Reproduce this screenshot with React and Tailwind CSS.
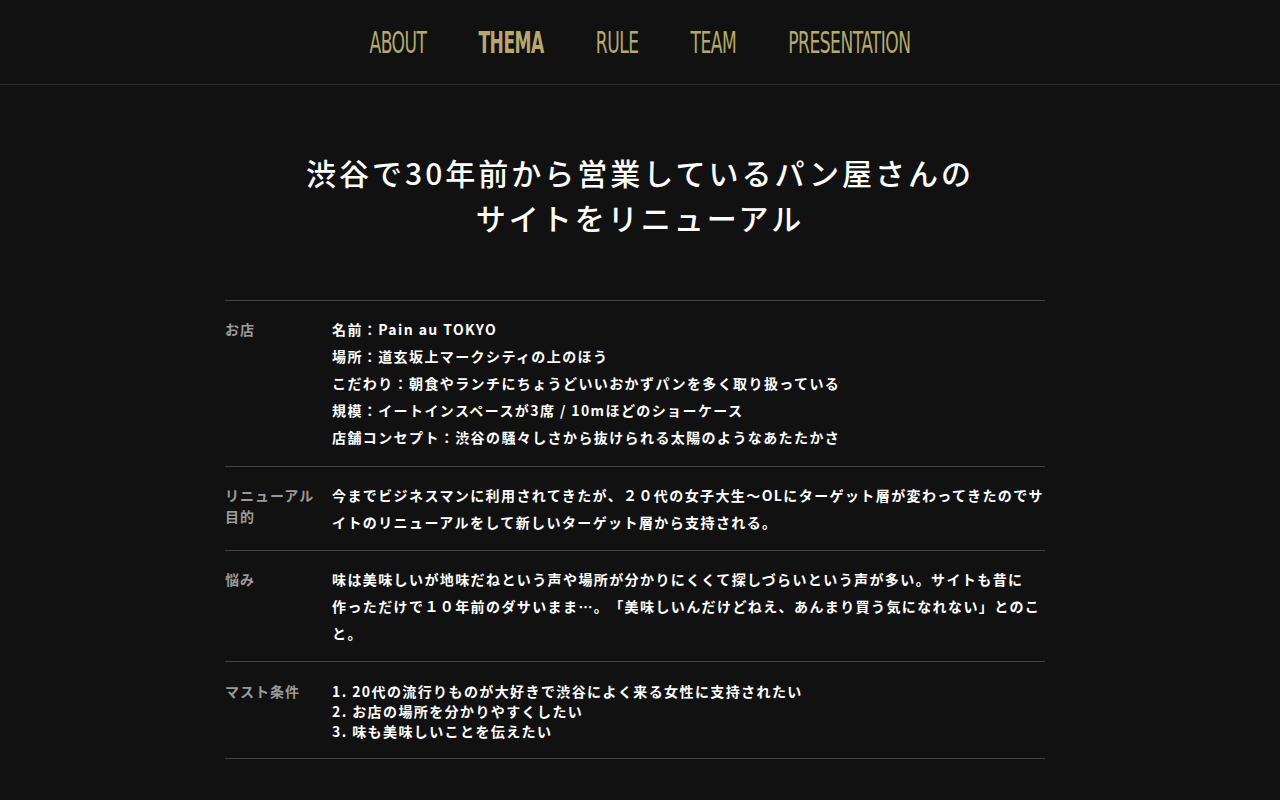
const navItems = [
  { label: 'ABOUT' },
  { label: 'THEMA', active: true },
  { label: 'RULE' },
  { label: 'TEAM' },
  { label: 'PRESENTATION' },
];

const shopLines = [
  '名前：Pain au TOKYO',
  '場所：道玄坂上マークシティの上のほう',
  'こだわり：朝食やランチにちょうどいいおかずパンを多く取り扱っている',
  '規模：イートインスペースが3席 / 10mほどのショーケース',
  '店舗コンセプト：渋谷の騒々しさから抜けられる太陽のようなあたたかさ',
];

const mustList = [
  '1. 20代の流行りものが大好きで渋谷によく来る女性に支持されたい',
  '2. お店の場所を分かりやすくしたい',
  '3. 味も美味しいことを伝えたい',
];

function Row({ label, children, pad = 'pt-[15px] pb-[15px]', labelPad = 'pt-[3px]' }) {
  return (
    <div className={`flex border-b border-[#444] ${pad}`}>
      <div
        className={`w-[107px] shrink-0 pr-[10px] text-sm font-bold leading-[21px] tracking-[0.07em] text-[#9b9b9b] ${labelPad}`}
      >
        {label}
      </div>
      <div className="flex-1 text-sm font-bold tracking-[0.1em] text-white [line-break:strict] [text-spacing-trim:space-all]">
        {children}
      </div>
    </div>
  );
}

export default function App() {
  return (
    <div
      lang="ja"
      className="min-h-screen bg-[#111111]"
      style={{ fontFamily: '"Noto Sans CJK JP", "Noto Sans", sans-serif' }}
    >
      <header className="flex h-[85px] items-center justify-center border-b border-[#2a2a2a]">
        <nav className="flex gap-[52px]">
          {navItems.map((item) => (
            <a
              key={item.label}
              href="#"
              className={`inline-block origin-center scale-y-[1.6] text-[19px] leading-none tracking-[-0.5px] text-[#b5a96f] ${
                item.active ? 'font-bold' : 'font-normal'
              }`}
              style={{ fontFamily: '"Liberation Sans Narrow", "DejaVu Sans Condensed", "Liberation Sans", sans-serif' }}
            >
              {item.label}
            </a>
          ))}
        </nav>
      </header>

      <main className="pt-[65px]">
        <h1 className="text-center text-[30px] font-medium leading-[45px] tracking-[0.1em] text-white">
          渋谷で30年前から営業しているパン屋さんの
          <br />
          サイトをリニューアル
        </h1>

        <div className="mx-auto mt-[60px] w-[830px] pr-[10px]">
          <div className="border-t border-[#444]">
            <Row label="お店">
              {shopLines.map((line) => (
                <p key={line} className="leading-[27px]">
                  {line}
                </p>
              ))}
            </Row>
            <Row label="リニューアル目的" pad="pt-[15px] pb-[14px]">
              <p className="leading-[27px]">
                今までビジネスマンに利用されてきたが、２０代の女子大生〜OLにターゲット層が変わってきたのでサイトのリニューアルをして新しいターゲット層から支持される。
              </p>
            </Row>
            <Row label="悩み" pad="pt-[15px] pb-[14px]">
              <p className="leading-[27px]">
                味は美味しいが地味だねという声や場所が分かりにくくて探しづらいという声が多い。サイトも昔に作っただけで１０年前のダサいまま…。「美味しいんだけどねえ、あんまり買う気になれない」とのこと。
              </p>
            </Row>
            <Row label="マスト条件" pad="pt-[19px] pb-[17px]" labelPad="pt-0">
              <ul>
                {mustList.map((item) => (
                  <li key={item} className="leading-[20px]">
                    {item}
                  </li>
                ))}
              </ul>
            </Row>
          </div>
        </div>
      </main>
    </div>
  );
}
